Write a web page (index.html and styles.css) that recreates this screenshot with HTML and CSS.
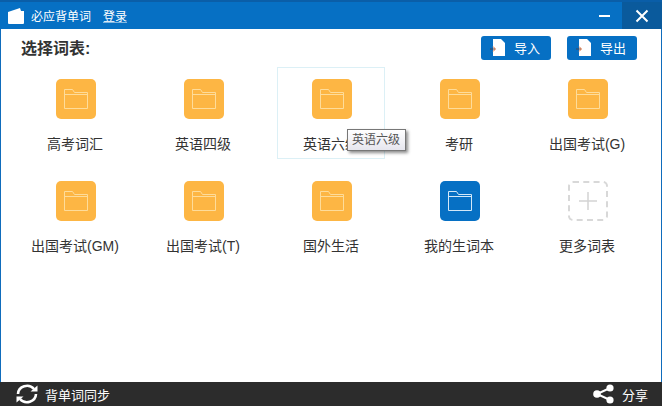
FILE: index.html
```html
<!DOCTYPE html>
<html lang="zh-CN">
<head>
  <meta charset="UTF-8" />
  <title>必应背单词</title>
  <link rel="stylesheet" href="styles.css">
</head>
<body>
  <svg class="defs" width="0" height="0">
    <symbol id="folder" viewBox="0 0 24 20">
      <path d="M.5 19.500V.5h8l2 3h13v16zM.5 5.500h23" fill="none" stroke="currentColor" stroke-width="1"/>
    </symbol>
    <symbol id="file" viewBox="0 0 16 20">
      <path d="M3 2h8l4 4v13H3z" fill="#fff"/>
      <path d="M0 12h5" stroke="#445" stroke-width="1"/>
      <path d="M3 9.500 5.500 12 3 14.500" fill="none" stroke="#e2703a" stroke-width="1"/>
    </symbol>
  </svg>

  <div class="window">
    <header class="titlebar">
      <svg class="app-icon" width="18" height="16" viewBox="0 0 18 16">
        <path d="M1 4l12-4 1 3h3v12a1 1 0 0 1-1 1H2a1 1 0 0 1-1-1z" fill="#fff"/>
      </svg>
      <span class="app-name">必应背单词</span>
      <a class="login">登录</a>
      <div class="win-controls">
        <span class="win-btn"><i class="min-mark"></i></span>
        <span class="win-btn win-close">
          <svg width="14" height="14" viewBox="0 0 14 14"><path d="M1.500 1.500l11 11M12.500 1.500l-11 11" stroke="#fff" stroke-width="2"/></svg>
        </span>
      </div>
    </header>

    <main class="content">
      <div class="toolbar">
        <h1>选择词表:</h1>
        <button class="tool-btn"><svg width="16" height="20"><use href="#file"/></svg>导入</button>
        <button class="tool-btn"><svg width="16" height="20"><use href="#file"/></svg>导出</button>
      </div>

      <div class="grid">
        <div class="cell"><span class="tile"><svg width="24" height="20"><use href="#folder"/></svg></span><span class="label">高考词汇</span></div>
        <div class="cell"><span class="tile"><svg width="24" height="20"><use href="#folder"/></svg></span><span class="label">英语四级</span></div>
        <div class="cell cell-hover"><span class="tile"><svg width="24" height="20"><use href="#folder"/></svg></span><span class="label">英语六级</span><span class="tooltip">英语六级</span></div>
        <div class="cell"><span class="tile"><svg width="24" height="20"><use href="#folder"/></svg></span><span class="label">考研</span></div>
        <div class="cell"><span class="tile"><svg width="24" height="20"><use href="#folder"/></svg></span><span class="label">出国考试(G)</span></div>
        <div class="cell"><span class="tile"><svg width="24" height="20"><use href="#folder"/></svg></span><span class="label">出国考试(GM)</span></div>
        <div class="cell"><span class="tile"><svg width="24" height="20"><use href="#folder"/></svg></span><span class="label">出国考试(T)</span></div>
        <div class="cell"><span class="tile"><svg width="24" height="20"><use href="#folder"/></svg></span><span class="label">国外生活</span></div>
        <div class="cell"><span class="tile tile-blue"><svg width="24" height="20"><use href="#folder"/></svg></span><span class="label">我的生词本</span></div>
        <div class="cell"><span class="tile tile-add"><svg width="18" height="18" viewBox="0 0 18 18"><path d="M9 0v18M0 9h18" stroke="#d4d4d4" stroke-width="1.500"/></svg></span><span class="label">更多词表</span></div>
      </div>
    </main>

    <footer class="statusbar">
      <svg width="24" height="20" viewBox="0 0 24 20">
        <path d="M3 10a9 8.500 0 0 1 16-5M21 10a9 8.500 0 0 1-16 5" fill="none" stroke="#fff" stroke-width="2.600"/>
        <path d="M15.500 7.500h7v-6zM8.500 12.500h-7v6z" fill="#fff"/>
      </svg>
      <span class="sync">背单词同步</span>
      <svg class="share-icon" width="21" height="20" viewBox="0 0 21 20">
        <path d="M17 4L4 10l13 6" fill="none" stroke="#fff" stroke-width="2"/>
        <circle cx="17" cy="4" r="3.600" fill="#fff"/><circle cx="4" cy="10" r="3.800" fill="#fff"/><circle cx="17" cy="16" r="3.600" fill="#fff"/>
      </svg>
      <span>分享</span>
    </footer>
  </div>
</body>
</html>
```

FILE: styles.css
```css
html, body {
  height: 100%;
  margin: 0;
}
body {
  font-family: "Liberation Sans", "Noto Sans CJK SC", sans-serif;
  background: #fff;
  overflow: hidden;
}
.defs {
  position: absolute;
}
.window {
  height: 406px;
  box-sizing: border-box;
  display: flex;
  flex-direction: column;
  border-left: 1px solid #0f6cbc;
  border-right: 1px solid #0f6cbc;
}
.titlebar {
  height: 29px;
  box-sizing: border-box;
  flex: none;
  display: flex;
  align-items: center;
  padding-left: 7px;
  margin: 0 -1px;
  background: #0670c4;
  border-top: 2px solid #0a5ea8;
  color: #fff;
  font-size: 12px;
}
.app-icon {
  margin-right: 6px;
}
.login {
  margin-left: 12px;
  text-decoration: underline;
  text-decoration-color: rgba(255, 255, 255, 0.5);
}
.win-controls {
  margin-left: auto;
  display: flex;
  align-self: stretch;
}
.win-btn {
  width: 36px;
  display: flex;
  align-items: center;
  justify-content: center;
}
.win-close {
  width: 40px;
  background: #0a5a9c;
}
.min-mark {
  width: 11px;
  height: 2px;
  background: #fff;
}
.content {
  flex: 1;
  padding: 6px 24px 0 20px;
}
.toolbar {
  display: flex;
  align-items: center;
  gap: 16px;
  height: 26px;
  margin-bottom: 6px;
}
.toolbar h1 {
  margin: 0 auto 0 0;
  padding-bottom: 3px;
  font-size: 16px;
  font-weight: bold;
  color: #333;
}
.tool-btn {
  width: 70px;
  height: 24px;
  padding: 0 0 2px 9px;
  display: flex;
  align-items: center;
  gap: 8px;
  border: none;
  border-radius: 3px;
  background: #0670c4;
  color: #fff;
  font: inherit;
  font-size: 13px;
}
.grid {
  display: grid;
  grid-template-columns: repeat(5, 108px);
  grid-auto-rows: 92px;
  column-gap: 20px;
  row-gap: 10px;
}
.cell {
  position: relative;
  box-sizing: border-box;
  border: 1px solid transparent;
  padding-top: 11px;
  display: flex;
  flex-direction: column;
  align-items: center;
}
.cell-hover {
  border-color: #dcf0f6;
}
.tile {
  width: 40px;
  height: 40px;
  margin-left: 2px;
  box-sizing: border-box;
  border-radius: 5px;
  display: flex;
  align-items: center;
  justify-content: center;
  background: #fdb644;
  color: #fedc9a;
}
.tile-blue {
  background: #0670c4;
  color: #d3e8f8;
}
.tile-add {
  background: none;
  border: 2px dashed #d8d8d8;
}
.label {
  margin-top: 15px;
  font-size: 14px;
  line-height: 20px;
  color: #333;
  white-space: nowrap;
}
.tooltip {
  position: absolute;
  left: 69px;
  top: 61px;
  padding: 0 5px 0 4px;
  line-height: 20px;
  font-size: 12px;
  color: #555;
  white-space: nowrap;
  background: linear-gradient(#fff, #e6e6ee);
  border: 1px solid #777;
  box-shadow: 2px 2px 3px rgba(0, 0, 0, 0.45);
}
.statusbar {
  height: 24px;
  flex: none;
  margin: 0 -1px;
  padding: 0 14px 0 15px;
  display: flex;
  align-items: center;
  gap: 6px;
  background: #2c2c2c;
  color: #fff;
  font-size: 13px;
}
.share-icon {
  margin-left: auto;
  margin-right: 2px;
}
```
